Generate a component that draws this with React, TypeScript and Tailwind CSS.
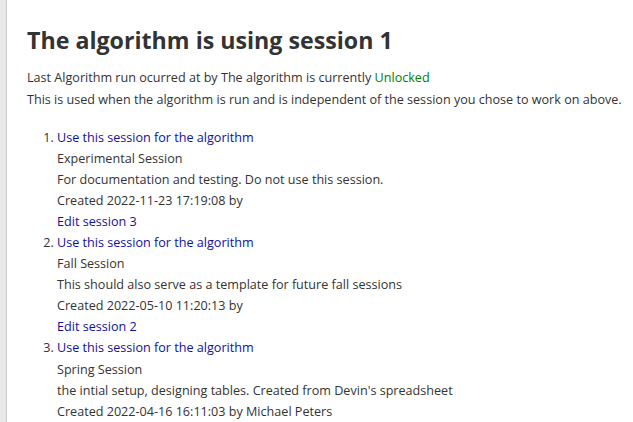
export default function App() {
  const sessions = [
    { title: "Experimental Session", desc: "For documentation and testing. Do not use this session.", created: "Created 2022-11-23 17:19:08 by", edit: "Edit session 3" },
    { title: "Fall Session", desc: "This should also serve as a template for future fall sessions", created: "Created 2022-05-10 11:20:13 by", edit: "Edit session 2" },
    { title: "Spring Session", desc: "the intial setup, designing tables. Created from Devin's spreadsheet", created: "Created 2022-04-16 16:11:03 by Michael Peters", edit: "Edit session 1" },
  ];
  return (
    <div className="flex h-[422px] overflow-hidden bg-white text-[#333] font-['Open_Sans',sans-serif]">
      <div className="w-[7px] shrink-0 bg-[#e8e8e8] border-r border-[#c8c8c8]" />
      <div className="flex-1 pl-[20px] pt-[24px]">
        <h1 className="text-[23.2px] font-bold leading-[32px] text-[#333]">The algorithm is using session 1</h1>
        <p className="mt-[10.5px] text-[12.6px] leading-[22px]">
          Last Algorithm run ocurred at by The algorithm is currently <span className="text-[#008000]">Unlocked</span>
          <br />
          This is used when the algorithm is run and is independent of the session you chose to work on above.
        </p>
        <ol className="mt-[16px] list-decimal pl-[30px] text-[12.6px] leading-[21.1px]">
          {sessions.map((s) => (
            <li key={s.edit}>
              <a className="text-[#10109a]">Use this session for the algorithm</a>
              <div>{s.title}</div>
              <div>{s.desc}</div>
              <div>{s.created}</div>
              <a className="block text-[#10109a]">{s.edit}</a>
            </li>
          ))}
        </ol>
      </div>
    </div>
  );
}
